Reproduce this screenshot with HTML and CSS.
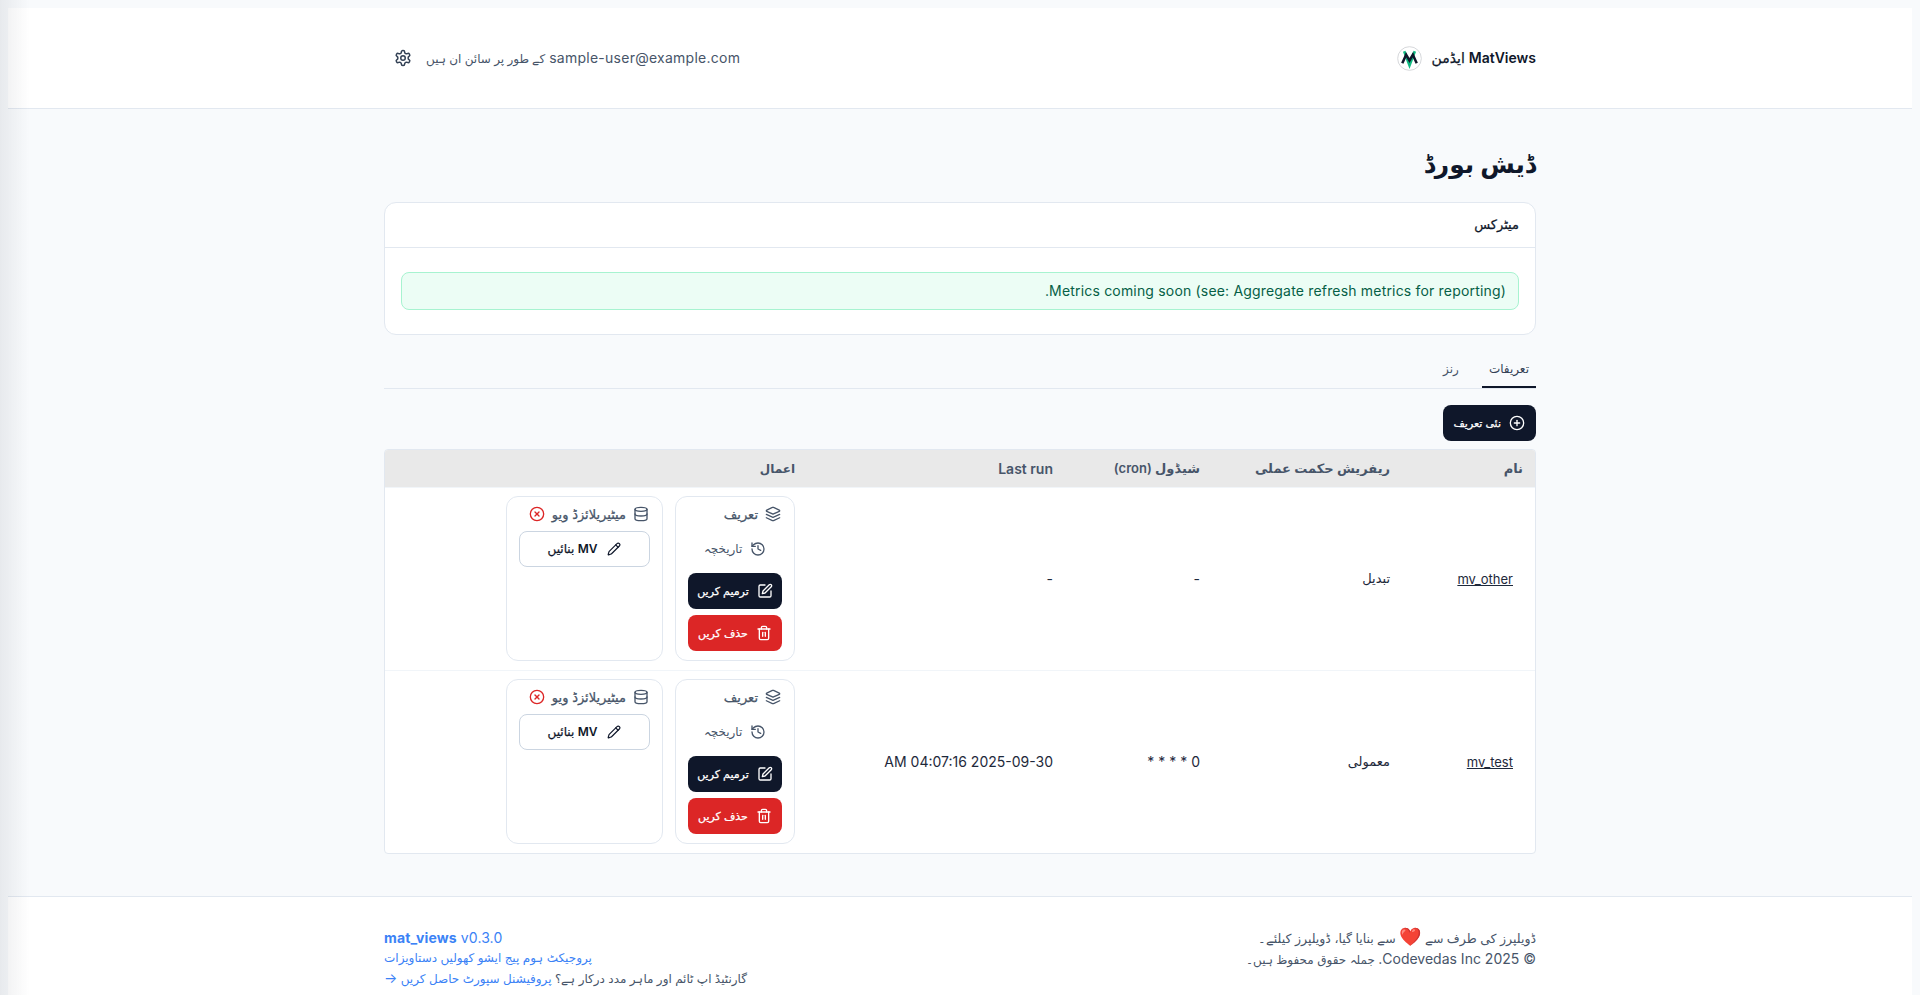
FILE: index.html
```html
<!DOCTYPE html>
<html lang="ur" dir="rtl">
<head>
<meta charset="utf-8">
<title>MatViews</title>
<link rel="stylesheet" href="styles.css">
</head>
<body>
<svg class="sprite" width="0" height="0" aria-hidden="true">
  <symbol id="i-settings" viewBox="0 0 24 24"><path d="M12.22 2h-.44a2 2 0 0 0-2 2v.18a2 2 0 0 1-1 1.73l-.43.25a2 2 0 0 1-2 0l-.15-.08a2 2 0 0 0-2.73.73l-.22.38a2 2 0 0 0 .73 2.73l.15.1a2 2 0 0 1 1 1.72v.51a2 2 0 0 1-1 1.74l-.15.09a2 2 0 0 0-.73 2.73l.22.38a2 2 0 0 0 2.73.73l.15-.08a2 2 0 0 1 2 0l.43.25a2 2 0 0 1 1 1.73V20a2 2 0 0 0 2 2h.44a2 2 0 0 0 2-2v-.18a2 2 0 0 1 1-1.73l.43-.25a2 2 0 0 1 2 0l.15.08a2 2 0 0 0 2.73-.73l.22-.39a2 2 0 0 0-.73-2.73l-.15-.08a2 2 0 0 1-1-1.74v-.5a2 2 0 0 1 1-1.74l.15-.09a2 2 0 0 0 .73-2.73l-.22-.38a2 2 0 0 0-2.73-.73l-.15.08a2 2 0 0 1-2 0l-.43-.25a2 2 0 0 1-1-1.73V4a2 2 0 0 0-2-2z"/><circle cx="12" cy="12" r="3"/></symbol>
  <symbol id="i-plus" viewBox="0 0 24 24"><circle cx="12" cy="12" r="10"/><path d="M8 12h8"/><path d="M12 8v8"/></symbol>
  <symbol id="i-layers" viewBox="0 0 24 24"><path d="m12.83 2.18a2 2 0 0 0-1.66 0L2.6 6.08a1 1 0 0 0 0 1.83l8.58 3.91a2 2 0 0 0 1.66 0l8.58-3.9a1 1 0 0 0 0-1.83Z"/><path d="m22 17.65-9.17 4.16a2 2 0 0 1-1.66 0L2 17.65"/><path d="m22 12.65-9.17 4.16a2 2 0 0 1-1.66 0L2 12.65"/></symbol>
  <symbol id="i-history" viewBox="0 0 24 24"><path d="M3 12a9 9 0 1 0 9-9 9.75 9.75 0 0 0-6.74 2.74L3 8"/><path d="M3 3v5h5"/><path d="M12 7v5l4 2"/></symbol>
  <symbol id="i-edit" viewBox="0 0 24 24"><path d="M12 3H5a2 2 0 0 0-2 2v14a2 2 0 0 0 2 2h14a2 2 0 0 0 2-2v-7"/><path d="M18.375 2.625a2.121 2.121 0 1 1 3 3L12 15l-4 1 1-4Z"/></symbol>
  <symbol id="i-trash" viewBox="0 0 24 24"><path d="M3 6h18"/><path d="M19 6v14c0 1-1 2-2 2H7c-1 0-2-1-2-2V6"/><path d="M8 6V4c0-1 1-2 2-2h4c1 0 2 1 2 2v2"/><path d="M10 11v6"/><path d="M14 11v6"/></symbol>
  <symbol id="i-db" viewBox="0 0 24 24"><ellipse cx="12" cy="5" rx="9" ry="3"/><path d="M3 5v14a9 3 0 0 0 18 0V5"/><path d="M3 12a9 3 0 0 0 18 0"/></symbol>
  <symbol id="i-x" viewBox="0 0 24 24"><circle cx="12" cy="12" r="10"/><path d="m15 9-6 6"/><path d="m9 9 6 6"/></symbol>
  <symbol id="i-pencil" viewBox="0 0 24 24"><path d="M21.174 6.812a1 1 0 0 0-3.986-3.987L3.842 16.174a2 2 0 0 0-.5.83l-1.321 4.352a.5.5 0 0 0 .623.622l4.353-1.32a2 2 0 0 0 .83-.497z"/><path d="m15 5 4 4"/></symbol>
</svg>

<header class="topbar">
  <div class="wrap topbar-in">
    <div class="brand">
      <span class="lift"><span class="lat">MatViews</span> <span class="ur">ایڈمن</span></span>
      <svg class="logo" viewBox="0 0 26 26" aria-hidden="true">
        <circle class="logo-ring" cx="13" cy="13" r="12.3"/>
        <polyline class="logo-v" points="7.5,5.500 13,20 18.500,5.500"/>
        <polyline class="logo-m" points="5.500,18 9.500,9 13,15 16.500,9 20.500,18"/>
      </svg>
    </div>
    <div class="account">
      <span class="lift"><span class="lat">sample-user@example.com</span> <span class="ur-sm">کے طور پر سائن ان ہیں</span></span>
      <svg class="ic ic-18"><use href="#i-settings"/></svg>
    </div>
  </div>
</header>

<main class="wrap content">
  <h1 class="title">ڈیش بورڈ</h1>

  <section class="card">
    <div class="card-head">میٹرکس</div>
    <div class="card-body">
      <div class="notice">Metrics coming soon (see: Aggregate refresh metrics for reporting).</div>
    </div>
  </section>

  <nav class="tabs">
    <a class="tab tab-on">تعریفات</a>
    <a class="tab">رنز</a>
  </nav>

  <div class="toolbar">
    <a class="btn btn-dark btn-new"><svg class="ic ic-16"><use href="#i-plus"/></svg><span>نئی تعریف</span></a>
  </div>

  <div class="table-box">
    <table class="table">
      <colgroup>
        <col class="c-name"><col class="c-strategy"><col class="c-cron"><col class="c-last"><col class="c-actions">
      </colgroup>
      <thead>
        <tr><th>نام</th><th>ریفریش حکمت عملی</th><th>شیڈول <span class="lat">(cron)</span></th><th class="th-lg">Last run</th><th class="th-sm">اعمال</th></tr>
      </thead>
      <tbody>
        <tr>
          <td><a class="name-link">mv_other</a></td>
          <td class="cell-ur">تبدیل</td>
          <td>-</td>
          <td>-</td>
          <td>
            <div class="actions">
              <div class="panel panel-def">
                <div class="panel-row"><svg class="ic ic-16"><use href="#i-layers"/></svg><span>تعریف</span></div>
                <a class="panel-link"><svg class="ic ic-16"><use href="#i-history"/></svg><span>تاریخچہ</span></a>
                <a class="btn btn-dark"><svg class="ic ic-16"><use href="#i-edit"/></svg><span>ترمیم کریں</span></a>
                <a class="btn btn-red"><svg class="ic ic-16"><use href="#i-trash"/></svg><span>حذف کریں</span></a>
              </div>
              <div class="panel panel-mv">
                <div class="panel-row"><svg class="ic ic-16"><use href="#i-db"/></svg><span>میٹیریلائزڈ ویو</span><svg class="ic ic-16 ic-red"><use href="#i-x"/></svg></div>
                <a class="btn btn-line"><svg class="ic ic-14"><use href="#i-pencil"/></svg><span><b class="mv">MV</b> بنائیں</span></a>
              </div>
            </div>
          </td>
        </tr>
        <tr>
          <td><a class="name-link">mv_test</a></td>
          <td class="cell-ur">معمولی</td>
          <td>0 * * * *</td>
          <td>2025-09-30 04:07:16 AM</td>
          <td>
            <div class="actions">
              <div class="panel panel-def">
                <div class="panel-row"><svg class="ic ic-16"><use href="#i-layers"/></svg><span>تعریف</span></div>
                <a class="panel-link"><svg class="ic ic-16"><use href="#i-history"/></svg><span>تاریخچہ</span></a>
                <a class="btn btn-dark"><svg class="ic ic-16"><use href="#i-edit"/></svg><span>ترمیم کریں</span></a>
                <a class="btn btn-red"><svg class="ic ic-16"><use href="#i-trash"/></svg><span>حذف کریں</span></a>
              </div>
              <div class="panel panel-mv">
                <div class="panel-row"><svg class="ic ic-16"><use href="#i-db"/></svg><span>میٹیریلائزڈ ویو</span><svg class="ic ic-16 ic-red"><use href="#i-x"/></svg></div>
                <a class="btn btn-line"><svg class="ic ic-14"><use href="#i-pencil"/></svg><span><b class="mv">MV</b> بنائیں</span></a>
              </div>
            </div>
          </td>
        </tr>
      </tbody>
    </table>
  </div>
</main>

<footer class="footer">
  <div class="wrap footer-in">
    <div class="foot-start">
      <div>ڈویلپرز کی طرف سے <span class="heart">❤️</span> سے بنایا گیا، ڈویلپرز کیلئے۔</div>
      <div class="foot-copy"><span class="foot-lat">© 2025 Codevedas Inc.</span> جملہ حقوق محفوظ ہیں۔</div>
    </div>
    <div class="foot-end">
      <div class="blue foot-lat foot-ver"><b>mat_views</b> v0.3.0</div>
      <div class="blue"><a>پروجیکٹ ہوم پیج</a> <a>ایشو کھولیں</a> <a>دستاویزات</a></div>
      <div>گارنٹیڈ اپ ٹائم اور ماہر مدد درکار ہے؟ <a class="blue">پروفیشنل سپورٹ حاصل کریں <span class="foot-lat">→</span></a></div>
    </div>
  </div>
</footer>
</body>
</html>
```

FILE: styles.css
```css
* { box-sizing: border-box; }
html { background: #f8fafc; }
body {
  margin: 8px 8px 0;
  font-family: Inter, "DejaVu Sans", sans-serif;
  font-size: 14px;
  color: #0f172a;
}
html::before {
  content: "";
  position: fixed;
  inset: 0 auto 0 0;
  width: 30px;
  background: linear-gradient(to right, rgba(15, 23, 42, .07), rgba(15, 23, 42, 0));
  pointer-events: none;
  z-index: 5;
}
.sprite { position: absolute; }
.wrap { width: 1152px; margin: 0 auto; }
.ic { fill: none; stroke: currentColor; stroke-width: 2; stroke-linecap: round; stroke-linejoin: round; flex: none; }
.ic-18 { width: 18px; height: 18px; }
.ic-16 { width: 16px; height: 16px; }
.ic-14 { width: 14px; height: 14px; }
.ic-red { color: #dc2626; }

.topbar { height: 101px; background: #fff; border-bottom: 1px solid #e2e8f0; }
.topbar-in { height: 100px; display: flex; align-items: center; justify-content: space-between; }
.lift { margin-bottom: 2px; }
.brand { display: flex; align-items: center; gap: 10px; }
.brand .lat { font-size: 14px; font-weight: 600; }
.brand .ur { font-size: 14px; -webkit-text-stroke: .25px currentColor; }
.logo { width: 25px; height: 25px; }
.logo-ring { fill: #fff; stroke: #d4d6da; stroke-width: 1; }
.logo-v { fill: none; stroke: #10b981; stroke-width: 2.8; }
.logo-m { fill: none; stroke: #0f172a; stroke-width: 2.6; }
.account { display: flex; align-items: center; gap: 14px; color: #475569; margin-left: 10px; }
.account .lat { letter-spacing: .26px; }
.account .ic { color: #334155; }
.ur-sm { font-size: 12px; }

.content { padding: 40px 0 42px; }
.title { margin: 0 0 21px; font-size: 25px; line-height: 30px; padding-bottom: 2px; font-weight: 700; }

.card { background: #fff; border: 1px solid #e2e8f0; border-radius: 12px; }
.card-head { height: 45px; padding: 0 16px 3px; display: flex; align-items: center; font-size: 13px; -webkit-text-stroke: .25px currentColor; border-bottom: 1px solid #e2e8f0; }
.card-body { padding: 24px 16px; }
.notice { height: 38px; padding: 0 12px 2px; display: flex; align-items: center; background: #ecfdf5; border: 1px solid #a7f3d0; border-radius: 8px; color: #065f46; letter-spacing: .18px; }

.tabs { display: flex; gap: 16px; margin-top: 16px; border-bottom: 1px solid #e2e8f0; height: 38px; }
.tab { padding: 0 7px; height: 37px; line-height: 35px; font-size: 12px; color: #475569; }
.tab-on { border-bottom: 2px solid #0f172a; color: #334155; }

.toolbar { display: flex; margin-top: 16px; }
.btn { display: flex; align-items: center; justify-content: center; gap: 8px; height: 36px; border-radius: 8px; font-size: 11px; -webkit-text-stroke: .25px currentColor; }
.btn-dark { background: #0f172a; color: #fff; }
.btn-red { background: #dc2626; color: #fff; }
.btn-line { background: #fff; border: 1px solid #cbd5e1; color: #0f172a; gap: 10px; font-size: 12px; }
.btn-new { padding: 0 11px 0 10px; }
.mv { font-size: 12px; font-weight: 600; -webkit-text-stroke: 0; }

.table-box { margin-top: 8px; border: 1px solid #e2e8f0; background: #fff; border-radius: 4px; overflow: hidden; }
.table { width: 100%; border-collapse: collapse; table-layout: fixed; }
.c-name { width: 133px; }
.c-strategy { width: 190px; }
.c-cron { width: 147px; }
.c-last { width: 258px; }
.table th { height: 37px; padding: 0 12px; text-align: right; background: #e9e9e9; font-size: 13px; font-weight: 600; color: #475569; }
.table .th-lg { font-size: 14px; }
.table .th-sm { font-size: 12px; }
.table td { padding: 8px 12px 9px; text-align: right; vertical-align: middle; border-top: 1px solid #f1f5f9; color: #1e293b; }
.table .cell-ur { font-size: 13px; }
.name-link { color: #1e293b; text-decoration: underline; margin-right: 10px; font-size: 13px; }

.actions { display: flex; gap: 12px; align-items: stretch; }
.panel { border: 1px solid #e2e8f0; border-radius: 12px; padding: 9px 12px; background: #fff; display: flex; flex-direction: column; gap: 6px; }
.panel-def { width: 120px; }
.panel-mv { width: 157px; }
.panel-row { display: flex; align-items: center; gap: 7px; height: 16px; margin: 0 1px 3px 0; font-size: 13px; color: #475569; -webkit-text-stroke: .25px currentColor; }
.panel-link { display: flex; align-items: center; justify-content: center; gap: 8px; height: 36px; font-size: 12px; color: #475569; }

.footer { background: #fff; border-top: 1px solid #e2e8f0; height: 100px; }
.footer-in { display: flex; justify-content: space-between; padding-top: 31px; font-size: 12px; line-height: 20px; color: #475569; }
.foot-start { font-size: 12.5px; }
.foot-copy { font-size: 12px; }
.foot-end { text-align: left; }
.foot-lat { font-size: 14px; }
.foot-ver { letter-spacing: .12px; }
.blue { color: #3b82f6; }
.heart { font-size: 18px; line-height: 1; }
```
